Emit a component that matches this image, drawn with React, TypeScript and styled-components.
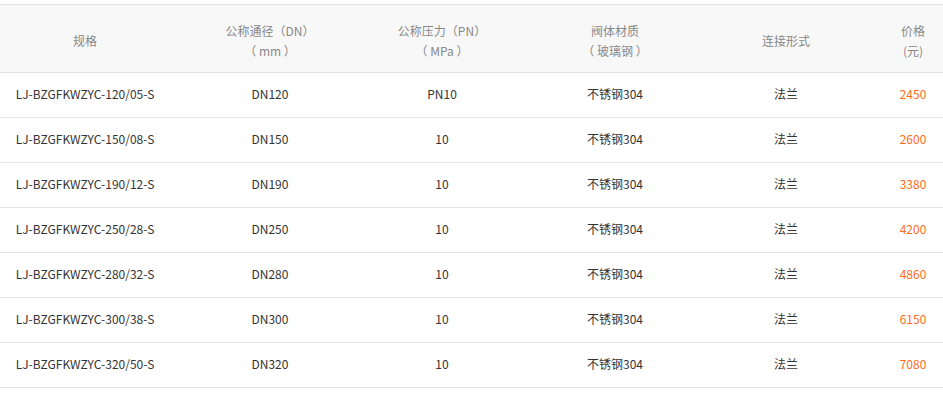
import styled, { createGlobalStyle } from "styled-components"

const GlobalStyle = createGlobalStyle`
  html, body {
    margin: 0;
    padding: 0;
    background: #fff;
  }
  body {
    font-family: "Noto Sans CJK SC", "Noto Sans", sans-serif;
    font-size: 12px;
  }
`

const rows = [
  { model: "LJ-BZGFKWZYC-120/05-S", dn: "DN120", pn: "PN10", material: "不锈钢304", joint: "法兰", price: "2450" },
  { model: "LJ-BZGFKWZYC-150/08-S", dn: "DN150", pn: "10", material: "不锈钢304", joint: "法兰", price: "2600" },
  { model: "LJ-BZGFKWZYC-190/12-S", dn: "DN190", pn: "10", material: "不锈钢304", joint: "法兰", price: "3380" },
  { model: "LJ-BZGFKWZYC-250/28-S", dn: "DN250", pn: "10", material: "不锈钢304", joint: "法兰", price: "4200" },
  { model: "LJ-BZGFKWZYC-280/32-S", dn: "DN280", pn: "10", material: "不锈钢304", joint: "法兰", price: "4860" },
  { model: "LJ-BZGFKWZYC-300/38-S", dn: "DN300", pn: "10", material: "不锈钢304", joint: "法兰", price: "6150" },
  { model: "LJ-BZGFKWZYC-320/50-S", dn: "DN320", pn: "10", material: "不锈钢304", joint: "法兰", price: "7080" },
]

const columns = "170px 200px 144px 202px 140px 114px"

const Page = styled.div`
  padding-top: 4px;
  width: 943px;
  overflow: hidden;
`

const Table = styled.div`
  width: 970px;
  border-top: 1px solid #e3e3e3;
`

const HeaderRow = styled.div`
  display: grid;
  grid-template-columns: ${columns};
  height: 67px;
  background: #f8f8f8;
  border-bottom: 1px solid #e0e0e0;
`

const HeadCell = styled.div`
  display: flex;
  flex-direction: column;
  align-items: center;
  justify-content: center;
  color: #888;
  line-height: 20px;
  text-align: center;
  padding-top: 4px;
`

const Row = styled.div`
  display: grid;
  grid-template-columns: ${columns};
  height: 44px;
  border-bottom: 1px solid #e3e3e3;
`

const Cell = styled.div<{ $price?: boolean }>`
  display: flex;
  align-items: center;
  justify-content: center;
  padding-bottom: 3px;
  color: ${(p) => (p.$price ? "#ff6a1a" : "#333")};
  white-space: nowrap;
`

export default function App() {
  return (
    <>
      <GlobalStyle />
      <Page>
        <Table>
          <HeaderRow>
            <HeadCell>规格</HeadCell>
            <HeadCell>
              <span>公称通径（DN）</span>
              <span>（ mm ）</span>
            </HeadCell>
            <HeadCell>
              <span>公称压力（PN）</span>
              <span>（ MPa ）</span>
            </HeadCell>
            <HeadCell>
              <span>阀体材质</span>
              <span>（ 玻璃钢 ）</span>
            </HeadCell>
            <HeadCell>连接形式</HeadCell>
            <HeadCell>
              <span>价格</span>
              <span>(元)</span>
            </HeadCell>
          </HeaderRow>
          {rows.map((r) => (
            <Row key={r.model}>
              <Cell>{r.model}</Cell>
              <Cell>{r.dn}</Cell>
              <Cell>{r.pn}</Cell>
              <Cell>{r.material}</Cell>
              <Cell>{r.joint}</Cell>
              <Cell $price>{r.price}</Cell>
            </Row>
          ))}
        </Table>
      </Page>
    </>
  )
}
